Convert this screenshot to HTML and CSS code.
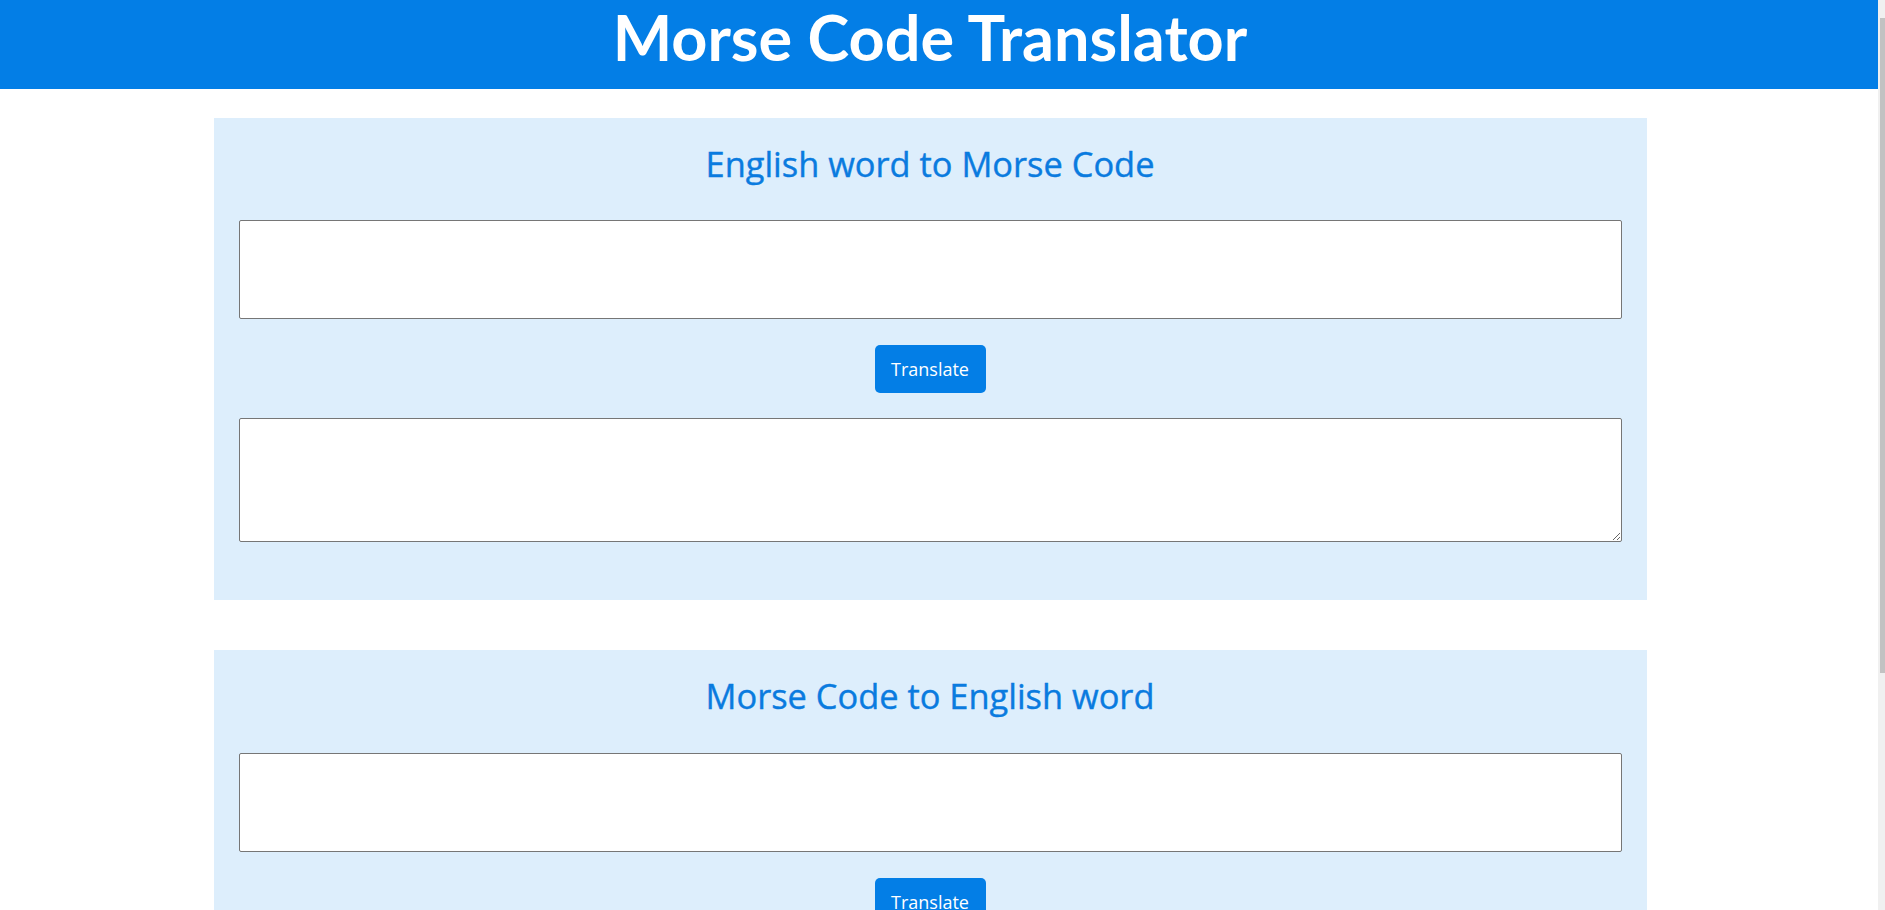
FILE: index.html
```html
<!DOCTYPE html>
<html lang="en">
<head>
<meta charset="utf-8">
<title>Morse Code Translator</title>
<link rel="stylesheet" href="styles.css">
</head>
<body>
<header class="topbar">
  <h1 class="topbar-title">Morse Code Translator</h1>
</header>
<main class="page">
  <section class="card">
    <h2 class="card-title">English word to Morse Code</h2>
    <input class="field" type="text">
    <button class="btn" type="button">Translate</button>
    <textarea class="output"></textarea>
  </section>
  <section class="card">
    <h2 class="card-title">Morse Code to English word</h2>
    <input class="field" type="text">
    <button class="btn" type="button">Translate</button>
    <textarea class="output"></textarea>
  </section>
</main>
<div class="scrollbar" aria-hidden="true"><div class="scrollbar-thumb"></div></div>
</body>
</html>
```
FILE: styles.css
```css
body {
  margin: 0;
  font-family: "Open Sans", "Noto Sans", sans-serif;
  background: #ffffff;
}

.topbar {
  height: 89px;
  background: #037ee6;
  padding-right: 25px;
  text-align: center;
}

.topbar-title {
  margin: 0;
  color: #ffffff;
  font-family: Lato, "Open Sans", sans-serif;
  font-size: 63px;
  font-weight: 700;
  line-height: 73px;
}

.page {
  display: flex;
  flex-direction: column;
  align-items: center;
  gap: 50px;
  padding: 29px 25px 60px 0;
}

.card {
  width: 1433px;
  box-sizing: border-box;
  background: #ddeefc;
  padding: 25px 25px 58px;
}

.card-title {
  margin: 0 0 36px;
  color: #0a7bdf;
  font-size: 34.4px;
  font-weight: 400;
  -webkit-text-stroke: 0.4px #0a7bdf;
  line-height: 1.2;
  text-align: center;
}

.field {
  display: block;
  width: 100%;
  height: 99px;
  box-sizing: border-box;
  margin: 0;
  border: 1px solid #767676;
  border-radius: 2px;
  background: #ffffff;
}

.btn {
  display: block;
  width: 111px;
  height: 48px;
  margin: 26px auto 25px;
  padding: 0;
  border: none;
  border-radius: 5px;
  background: #037ee6;
  color: #ffffff;
  font-family: "Open Sans", "Noto Sans", sans-serif;
  font-size: 18px;
}

.output {
  display: block;
  width: 100%;
  height: 124px;
  box-sizing: border-box;
  margin: 0;
  border: 1px solid #767676;
  border-radius: 2px;
  background: #ffffff;
}

.scrollbar {
  position: fixed;
  top: 0;
  right: 0;
  width: 7px;
  height: 100vh;
  display: flex;
  flex-direction: column;
  align-items: flex-end;
  background: #f0f0f0;
}

.scrollbar-thumb {
  width: 5px;
  height: 655px;
  margin-top: 18px;
  background: #c2c2c2;
}
```
